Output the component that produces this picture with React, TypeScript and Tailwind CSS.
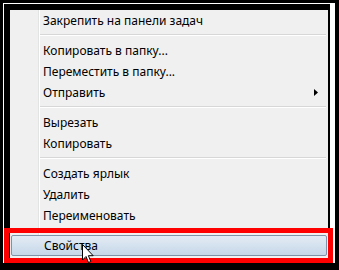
import React from "react";

type Entry = { label?: string; sub?: boolean; sep?: boolean; active?: boolean };

const entries: Entry[] = [
  { label: "Закрепить на панели задач" },
  { sep: true },
  { label: "Копировать в папку..." },
  { label: "Переместить в папку..." },
  { label: "Отправить", sub: true },
  { sep: true },
  { label: "Вырезать" },
  { label: "Копировать" },
  { sep: true },
  { label: "Создать ярлык" },
  { label: "Удалить" },
  { label: "Переименовать" },
  { sep: true },
  { label: "Свойства", active: true },
];

// gutter column with the etched vertical line
const Gutter = () => (
  <div className="w-[30px] shrink-0 self-stretch flex justify-end">
    <div className="w-px bg-[#e2e3e3]" />
    <div className="w-px bg-white" />
  </div>
);

const Cursor = () => (
  <svg width="13" height="20" viewBox="0 0 13 20" className="absolute left-[82px] top-[244px]">
    <path
      d="M0.5 0.5 L0.5 16 L4 12.5 L6.5 18.5 L8.8 17.5 L6.4 11.7 L11.2 11.7 Z"
      fill="#fff"
      stroke="#000"
      strokeWidth="1"
      strokeLinejoin="round"
    />
  </svg>
);

export default function App() {
  return (
    <div className="relative w-[339px] h-[270px] bg-black pl-[3px] pt-[3px] overflow-hidden">
      <div className="w-[332px] h-[260px] bg-white pl-px pt-px pr-[5px]">
        <div className="h-full bg-black pl-[6px] pt-[6px] pr-[2px]">
          <div
            className="h-full flex flex-col bg-[#f0f0f0] text-[12px] text-black"
            style={{ fontFamily: '"Noto Sans", "Liberation Sans", sans-serif' }}
          >
            {entries.map((e, i) =>
              e.sep ? (
                <div key={i} className="h-[9px] flex">
                  <Gutter />
                  <div className="flex-1 pr-[2px] pt-[3px]">
                    <div className="h-px bg-[#d7d7d7]" />
                    <div className="h-px bg-white" />
                  </div>
                </div>
              ) : e.active ? (
                <div key={i} className="px-px">
                  <div className="h-[21px] flex items-center pl-[32px] rounded-[2px] border border-[#7e93a8] bg-gradient-to-b from-[#e3ecf5] to-[#c6d7e8]">
                    {e.label}
                  </div>
                </div>
              ) : (
                <div key={i} className="h-[21px] flex items-center">
                  <Gutter />
                  <span className="flex-1 pl-[3px]">{e.label}</span>
                  {e.sub && (
                    <svg width="4" height="7" viewBox="0 0 4 7" className="mr-[10px]">
                      <path d="M0 0 L4 3.5 L0 7 Z" fill="#000" />
                    </svg>
                  )}
                </div>
              )
            )}
            <div className="flex-1 flex">
              <Gutter />
            </div>
          </div>
        </div>
      </div>
      {/* red annotation frame */}
      <div className="absolute left-[4px] top-[228px] w-[329px] h-[35px] border-[5px] border-[#ff0000]" />
      <Cursor />
    </div>
  );
}
